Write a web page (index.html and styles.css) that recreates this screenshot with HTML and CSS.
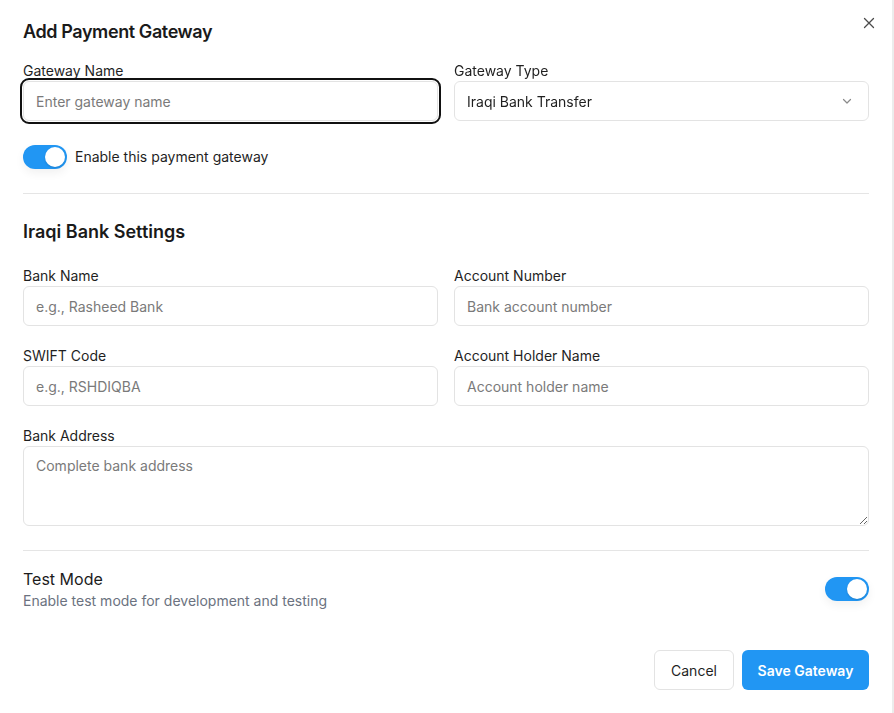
FILE: index.html
```html
<!DOCTYPE html>
<html lang="en">
<head>
<meta charset="utf-8">
<title>Add Payment Gateway</title>
<link rel="stylesheet" href="styles.css">
</head>
<body>
<div class="dialog">
  <button class="close" type="button" aria-label="Close">
    <svg width="12" height="12" viewBox="0 0 12 12"><path d="M1.5 1.5l9 9M10.5 1.5l-9 9" stroke="#4b4b4b" stroke-width="1.3" stroke-linecap="round" fill="none"/></svg>
  </button>
  <h2 class="title">Add Payment Gateway</h2>

  <div class="grid first-grid">
    <div class="field">
      <label class="label">Gateway Name</label>
      <input class="input focused" type="text" placeholder="Enter gateway name" autofocus>
    </div>
    <div class="field">
      <label class="label">Gateway Type</label>
      <div class="input select">
        <span>Iraqi Bank Transfer</span>
        <svg width="12" height="12" viewBox="0 0 12 12"><path d="M2.5 4.5l3.5 3.5 3.5-3.5" stroke="#8a8a8a" stroke-width="1.2" fill="none" stroke-linecap="round" stroke-linejoin="round"/></svg>
      </div>
    </div>
  </div>

  <div class="toggle-row">
    <span class="switch"><span class="knob"></span></span>
    <span class="toggle-label">Enable this payment gateway</span>
  </div>

  <hr class="divider">

  <h3 class="section-title">Iraqi Bank Settings</h3>

  <div class="grid settings-grid">
    <div class="field">
      <label class="label">Bank Name</label>
      <input class="input" type="text" placeholder="e.g., Rasheed Bank">
    </div>
    <div class="field">
      <label class="label">Account Number</label>
      <input class="input" type="text" placeholder="Bank account number">
    </div>
    <div class="field">
      <label class="label">SWIFT Code</label>
      <input class="input" type="text" placeholder="e.g., RSHDIQBA">
    </div>
    <div class="field">
      <label class="label">Account Holder Name</label>
      <input class="input" type="text" placeholder="Account holder name">
    </div>
    <div class="field full">
      <label class="label">Bank Address</label>
      <textarea class="input textarea" placeholder="Complete bank address"></textarea>
    </div>
  </div>

  <hr class="divider bottom-divider">

  <div class="test-row">
    <div class="test-text">
      <div class="test-title">Test Mode</div>
      <div class="test-sub">Enable test mode for development and testing</div>
    </div>
    <span class="switch"><span class="knob"></span></span>
  </div>

  <div class="actions">
    <button class="btn btn-cancel" type="button">Cancel</button>
    <button class="btn btn-save" type="button">Save Gateway</button>
  </div>
</div>
</body>
</html>
```

FILE: styles.css
```css
* { box-sizing: border-box; }
html, body {
  margin: 0;
  padding: 0;
  background: #ffffff;
}
body {
  font-family: Inter, "Noto Sans", "Liberation Sans", sans-serif;
  color: #1c1c1c;
  font-size: 14px;
}
.dialog {
  position: relative;
  width: 894px;
  height: 713px;
  padding: 18px 23px 22px 23px;
  border-right: 2px solid #ececec;
  overflow: hidden;
}
.close {
  position: absolute;
  top: 17px;
  right: 17px;
  width: 12px;
  height: 12px;
  padding: 0;
  border: 0;
  background: transparent;
  display: flex;
}
.title {
  margin: 0;
  font-size: 18px;
  line-height: 28px;
  font-weight: 600;
  letter-spacing: -0.4px;
  color: #1a1a1a;
}
.grid {
  display: grid;
  grid-template-columns: 1fr 1fr;
  column-gap: 16px;
}
.first-grid { margin-top: 14px; }
.settings-grid { row-gap: 19px; margin-top: 19px; }
.field {
  display: flex;
  flex-direction: column;
  gap: 0;
}
.field.full { grid-column: 1 / span 2; }
.label {
  font-size: 14px;
  line-height: 21px;
  color: #1f1f1f;
}
.input {
  height: 40px;
  width: 100%;
  border: 1px solid #e3e3e3;
  border-radius: 6px;
  padding: 0 12px;
  font-family: inherit;
  font-size: 14px;
  color: #1f1f1f;
  background: #fff;
  outline: none;
}
.input::placeholder { color: #7a7a7a; opacity: 1; }
.input.focused {
  outline: 2px solid #111;
  outline-offset: 1px;
  caret-color: #111;
}
.select {
  display: flex;
  align-items: center;
  justify-content: space-between;
  padding-right: 15px;
}
.textarea {
  height: 80px;
  padding: 9px 12px;
  line-height: 20px;
  resize: vertical;
}
.toggle-row {
  display: flex;
  align-items: center;
  gap: 8px;
  margin-top: 24px;
  height: 24px;
}
.toggle-label {
  font-size: 14px;
  line-height: 20px;
  color: #1f1f1f;
}
.switch {
  position: relative;
  display: inline-flex;
  align-items: center;
  justify-content: flex-end;
  width: 44px;
  height: 24px;
  padding: 2px;
  border-radius: 12px;
  background: #2196f3;
  box-shadow: 0 4px 10px rgba(0, 0, 0, 0.06);
  flex-shrink: 0;
}
.knob {
  width: 20px;
  height: 20px;
  border-radius: 50%;
  background: #fff;
  box-shadow: 0 1px 2px rgba(0, 0, 0, 0.15);
}
.divider {
  margin: 24px 0 0 0;
  border: 0;
  border-top: 1px solid #e5e5e5;
  height: 0;
}
.section-title {
  margin: 24px 0 0 0;
  font-size: 18px;
  line-height: 28px;
  font-weight: 600;
  color: #1a1a1a;
}
.bottom-divider { margin-top: 24px; }
.test-row {
  display: flex;
  align-items: center;
  justify-content: space-between;
  margin-top: 16px;
}
.test-title {
  font-size: 16px;
  line-height: 24px;
  color: #1c1c1c;
}
.test-sub {
  font-size: 14px;
  line-height: 20px;
  color: #6b7280;
}
.actions {
  display: flex;
  justify-content: flex-end;
  gap: 8px;
  margin-top: 39px;
}
.btn {
  height: 40px;
  border-radius: 6px;
  font-family: inherit;
  font-size: 14px;
  padding: 0;
  white-space: nowrap;
  cursor: pointer;
}
.btn-cancel {
  width: 80px;
  background: #fff;
  border: 1px solid #e3e3e3;
  color: #1f1f1f;
}
.btn-save {
  width: 127px;
  background: #2196f3;
  border: 0;
  color: #fff;
  font-weight: 600;
}
```
